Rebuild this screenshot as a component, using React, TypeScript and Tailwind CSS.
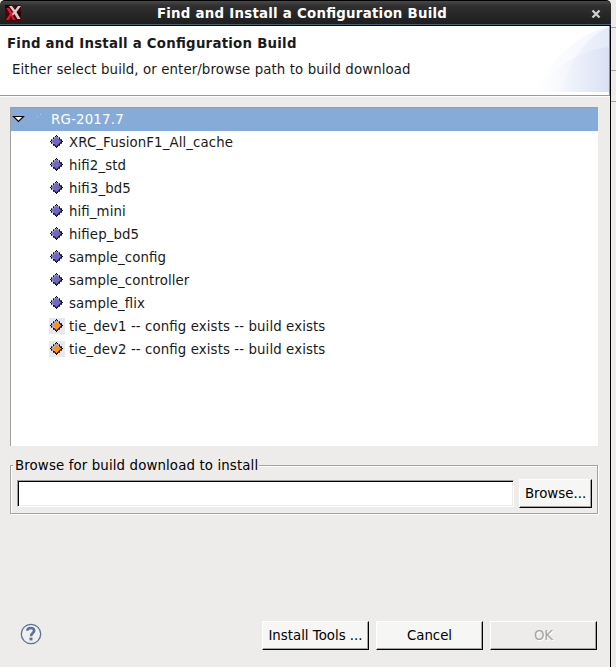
import React from "react";

const BUILDS = [
  "XRC_FusionF1_All_cache",
  "hifi2_std",
  "hifi3_bd5",
  "hifi_mini",
  "hifiep_bd5",
  "sample_config",
  "sample_controller",
  "sample_flix",
  "tie_dev1 -- config exists -- build exists",
  "tie_dev2 -- config exists -- build exists",
];

function XLogo() {
  return (
    <svg width="16" height="16" viewBox="0 0 16 16" className="block">
      <rect width="16" height="16" fill="#4c0508" />
      <path d="M0 0h5v3H0zM11 7h5v4h-5zM5 11h4v5H5z" fill="#200204" />
      <path d="M4 1h3l3 4 3-4h3l-4.500 6 4 7h-3l-3-5-2 2-1-2 2-2z" fill="#d4d0d0" />
      <path d="M1.500 3h2.500l2.500 4 2-.5-1.500 3 3.500 5.500H8l-2-4-2.500 4H1l4-6z" fill="#f01836" />
    </svg>
  );
}

// Diamond with a dithered outline, lit from the upper left.
function Diamond({ warm }: { warm: boolean }) {
  const cells: React.ReactElement[] = [];
  for (let y = -6; y <= 6; y++) {
    for (let x = -6; x <= 6; x++) {
      const d = Math.abs(x) + Math.abs(y);
      const lower = x + y > 0;
      if (d > 7) continue;
      if (d === 7 && (x % 2 === 0 || Math.abs(y) === 6 || Math.abs(x) === 1)) continue;
      let fill = warm ? "#ff9208" : "#7068c4";
      if (d === 7) fill = "#4a4a55";
      if (d === 6) fill = x % 2 !== 0 || x === 0 || y === 0 ? "#000000" : lower ? "#3c3a60" : "#a8a6c0";
      if (d === 5) fill = lower ? "#2e2b58" : warm ? "#8f88c0" : "#8e89cc";
      if (d === 4) fill = warm ? (lower ? "#ff9208" : "#e0b48c") : lower ? "#6660b8" : "#7a73cb";
      cells.push(<rect key={x + "," + y} x={x + 7} y={y + 7} width="1" height="1" fill={fill} />);
    }
  }
  return (
    <svg width="16" height="16" viewBox="0 0 16 16" shapeRendering="crispEdges" className="mb-px block">
      {warm && <rect width="16" height="16" fill="#e7e7ef" />}
      {cells}
    </svg>
  );
}

function PushButton({ label, width, disabled }: { label: string; width: string; disabled?: boolean }) {
  return (
    <button
      className={
        "block shrink-0 border border-t-white border-l-white border-r-black border-b-black text-center whitespace-nowrap " +
        (disabled
          ? "bg-[#edecea] text-[#a5a4a2] [text-shadow:1px_1px_0_#fff] "
          : "bg-[#f6f6f4] text-black ") +
        "shadow-[inset_-1px_-1px_0_#a3a3a1] " +
        width
      }
    >
      {label}
    </button>
  );
}

export default function App() {
  return (
    <div className="flex h-[667px] w-[616px] overflow-hidden bg-[#edecea] text-[13.33px] leading-[23px] text-[#1a1a1a] [font-family:'DejaVu_Sans',sans-serif] [font-feature-settings:'liga'_1]">
      <div className="flex w-[611px] flex-col">
        <header className="flex h-[26px] shrink-0 items-center rounded-t-[5px] border-t border-b border-black bg-linear-to-b from-[#4a4a4a] via-[#303030] via-20% to-[#1d1d1d] pr-[10px] pl-[5px] shadow-[inset_0_-1px_0_#46607f]">
          <XLogo />
          <h1 className="flex-1 pr-[8px] text-center font-bold tracking-[0.26px] text-white">Find and Install a Configuration Build</h1>
          <svg width="10" height="10" viewBox="0 0 10 10" className="mt-[1px] block">
            <path d="M1.500 1.500l7 7M8.500 1.500l-7 7" stroke="#d0d0d0" strokeWidth="2.300" />
          </svg>
        </header>

        <main className="flex flex-1 flex-col border-r border-black">
          <section className="flex h-[69px] justify-between border-r border-[#8f8f8f] bg-white">
            <div>
              <h2 className="mt-[6px] pl-[7px] font-bold tracking-[0.245px]">Find and Install a Configuration Build</h2>
              <p className="mt-[3px] pl-[12px] tracking-[0.105px]">Either select build, or enter/browse path to build download</p>
            </div>
            <svg width="75" height="66" viewBox="0 0 75 66" className="block">
              <defs>
                <linearGradient id="swoosh">
                  <stop offset="0" stopColor="#ffffff" />
                  <stop offset="1" stopColor="#f1f5fc" />
                </linearGradient>
                <linearGradient id="inner">
                  <stop offset="0" stopColor="#f4f7fd" />
                  <stop offset="1" stopColor="#e4eaf8" />
                </linearGradient>
                <linearGradient id="hill">
                  <stop offset="0" stopColor="#ffffff" stopOpacity="0" />
                  <stop offset="1" stopColor="#d9e0f4" />
                </linearGradient>
              </defs>
              <path d="M0 66C14 38 42 8 75 0V66z" fill="url(#swoosh)" />
              <path d="M28 66C34 38 50 12 75 1V66z" fill="url(#inner)" />
              <path d="M0 66C20 42 44 24 75 21V66z" fill="url(#hill)" />
            </svg>
          </section>
          <div className="h-[2px] border-t border-[#9c9b99] border-b border-b-white" />

          <section className="mt-[10px] ml-[10px] h-[339px] w-[588px] border-t border-l border-[#a09f9d] bg-white">
            <div className="flex h-[23px] items-center bg-[#86abd9] text-white">
              <svg width="14" height="8" viewBox="0 0 14 8" className="mb-px block">
                <path d="M2.500 1.500h10l-5 5z" fill="white" stroke="black" strokeWidth="1.200" />
              </svg>
              <svg width="5" height="4" viewBox="0 0 5 4" className="mb-[8px] ml-[12px] block">
                <path d="M0 2h1v1H0zM3 0h1v1H3z" fill="#b4cbe7" />
              </svg>
              <span className="pl-[9px] tracking-[0.200px]">RG-2017.7</span>
            </div>
            {BUILDS.map((name) => (
              <div key={name} className="flex h-[23px] items-center gap-[4px] pl-[38px]">
                <Diamond warm={name.startsWith("tie")} />
                <span className="tracking-[0.100px]">{name}</span>
              </div>
            ))}
          </section>

          <fieldset className="mt-[8px] ml-[10px] flex h-[60px] w-[588px] flex-col border border-[#a3a3a1] shadow-[1px_1px_0_#fff,inset_1px_1px_0_#fff]">
            <legend className="ml-[2px] bg-[#edecea] px-[2px] pr-px leading-[23px] tracking-[0.130px] text-black">Browse for build download to install</legend>
            <div className="mt-[2px] flex items-center pl-[6px]">
              <input
                aria-label="Build download path"
                className="h-[27px] w-[497px] border border-t-[#9c9b99] border-l-[#9c9b99] border-r-white border-b-white bg-white shadow-[inset_1px_1px_0_#000,inset_-1px_-1px_0_#edecea] outline-none"
              />
              <div className="ml-[5px]">
                <PushButton label="Browse..." width="w-[73px] h-[29px]" />
              </div>
            </div>
          </fieldset>

          <footer className="mt-auto mb-[17px] flex items-center gap-[7px] pr-[13px] pl-[20px]">
            <svg width="22" height="22" viewBox="0 0 22 22" className="mr-auto mb-[3px] block">
              <circle cx="11" cy="11" r="9.700" fill="#f0f0f0" stroke="#5d7196" strokeWidth="1.300" />
              <path d="M7.200 7.600C7.500 4.300 14.200 4 14.200 7.600C14.200 10 11 10 11 13.200" fill="none" stroke="#5d7196" strokeWidth="2.600" />
              <rect x="9.500" y="14.600" width="3" height="2.800" fill="#5d7196" />
            </svg>
            <PushButton label="Install Tools ..." width="w-[107px] h-[29px]" />
            <PushButton label="Cancel" width="w-[107px] h-[29px]" />
            <PushButton label="OK" width="w-[107px] h-[29px]" disabled />
          </footer>
        </main>
      </div>

      <aside className="flex flex-1 flex-col">
        <div className="h-[28px] border-b border-[#a3a3a1]" />
        <div className="h-[43px] border-b border-[#a3a3a1]" />
        <div className="h-[31px] border-b border-[#a3a3a1]" />
      </aside>
    </div>
  );
}
